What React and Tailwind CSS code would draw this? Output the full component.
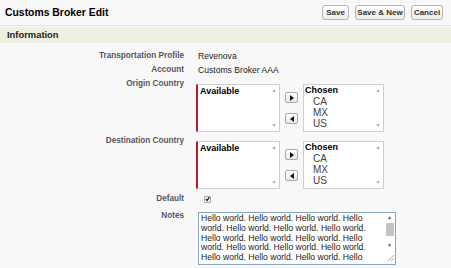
import React from "react";

const F = { fontFamily: '"Liberation Sans", Arial, sans-serif' };

function Btn({ children, w }) {
  return (
    <div
      className={`flex h-[15px] items-center justify-center rounded-[3px] border border-[#b5b5b5] bg-gradient-to-b from-white to-[#ececec] text-[8px] font-bold text-[#333] ${w}`}
    >
      {children}
    </div>
  );
}

function Scroll() {
  return (
    <div className="flex w-[10px] flex-col items-center justify-between py-[3px] text-[5px] leading-[5px] text-[#a8a8a8]">
      <span>▲</span>
      <span>▼</span>
    </div>
  );
}

function Dual() {
  return (
    <div className="flex items-start">
      <div className="flex h-[48px] w-[84px] border border-[#cfcfcf] border-l-[2px] border-l-[#b41f2b] bg-white pl-[1px]">
        <div className="flex-1 pl-[1px] pt-[1px] text-[9px] font-bold leading-[11px] text-black">Available</div>
        <Scroll />
      </div>
      <div className="ml-[5px] mt-[8px] flex flex-col gap-[10px]">
        <div className="flex h-[11px] w-[13px] items-center justify-center rounded-[2px] border border-[#aaa] bg-gradient-to-b from-white to-[#e8e8e8]">
          <svg width="4" height="6" viewBox="0 0 4 6"><path d="M0 0 L4 3 L0 6 Z" fill="#111" /></svg>
        </div>
        <div className="flex h-[11px] w-[13px] items-center justify-center rounded-[2px] border border-[#aaa] bg-gradient-to-b from-white to-[#e8e8e8]">
          <svg width="4" height="6" viewBox="0 0 4 6"><path d="M4 0 L0 3 L4 6 Z" fill="#111" /></svg>
        </div>
      </div>
      <div className="ml-[5px] flex h-[48px] w-[81px] border border-[#cfcfcf] bg-white">
        <div className="flex-1 pl-[1px] leading-[11px]">
          <div className="text-[9px] font-bold text-black">Chosen</div>
          <div className="pl-[8px] text-[10px] text-[#444]">CA</div>
          <div className="pl-[8px] text-[10px] text-[#444]">MX</div>
          <div className="pl-[8px] text-[10px] text-[#444]">US</div>
        </div>
        <Scroll />
      </div>
    </div>
  );
}

function Label({ children }) {
  return (
    <div className="w-[185px] shrink-0 pr-[1px] text-right text-[8.2px] font-bold leading-[14px] text-[#56565f]">
      {children}
    </div>
  );
}

export default function App() {
  const lines = [
    "Hello world. Hello world. Hello world. Hello",
    "world. Hello world. Hello world. Hello world.",
    "Hello world. Hello world. Hello world. Hello",
    "world. Hello world. Hello world. Hello world.",
    "Hello world. Hello world. Hello world. Hello",
  ];
  return (
    <div style={F} className="h-[268px] w-[451px] overflow-hidden bg-[#f8f8f8]">
      <div className="flex h-[26px] items-center justify-between border-b border-[#e3e3e3] pl-[5px] pr-[8px]">
        <div className="text-[10.4px] font-bold text-black">Customs Broker Edit</div>
        <div className="flex gap-[6px]">
          <Btn w="w-[27px]">Save</Btn>
          <Btn w="w-[50px]">Save &amp; New</Btn>
          <Btn w="w-[32px]">Cancel</Btn>
        </div>
      </div>
      <div className="mt-[1px] flex h-[16px] items-center bg-[#eef0e1] pl-[7px] text-[9.4px] font-bold text-[#222]">
        Information
      </div>
      <div className="pt-[6px]">
        <div className="flex">
          <Label>Transportation Profile</Label>
          <div className="pl-[13px] text-[8.6px] leading-[14px] text-[#222]">Revenova</div>
        </div>
        <div className="flex">
          <Label>Account</Label>
          <div className="pl-[13px] text-[8.6px] leading-[14px] text-[#222]">Customs Broker AAA</div>
        </div>
        <div className="flex">
          <Label>Origin Country</Label>
          <div className="pl-[11px] pt-[7px]">
            <Dual />
          </div>
        </div>
        <div className="mt-[2px] flex">
          <Label>Destination Country</Label>
          <div className="pl-[11px] pt-[7px]">
            <Dual />
          </div>
        </div>
        <div className="mt-[3px] flex">
          <Label>Default</Label>
          <div className="flex items-center pl-[19px]">
            <div className="flex h-[7px] w-[7px] items-center justify-center rounded-[1px] border border-[#aaa] bg-[#eee]">
              <svg width="6" height="6" viewBox="0 0 6 6"><path d="M1 3 L2.5 4.8 L5.2 0.8" stroke="#111" strokeWidth="1.3" fill="none" /></svg>
            </div>
          </div>
        </div>
        <div className="mt-[3px] flex">
          <Label>Notes</Label>
          <div className="pl-[13px] pt-[3px]">
            <div className="relative flex h-[53px] w-[198px] border border-[#88a6c8] bg-white">
              <div className="flex-1 overflow-hidden pl-[2px] pt-[1px] text-[8.6px] leading-[9.8px] text-[#222]">
                {lines.map((l, i) => (
                  <div key={i} className="whitespace-nowrap">{l}</div>
                ))}
              </div>
              <div className="flex w-[11px] flex-col items-center pt-[2px] text-[5px] leading-[5px] text-[#555]">
                <span>▲</span>
                <div className="mt-[3px] h-[13px] w-[8px] bg-[#c4c4c4]" />
                <span className="mt-[7px]">▼</span>
                <svg className="mt-[7px] ml-[2px]" width="6" height="6" viewBox="0 0 6 6"><path d="M0 6 L6 0 M3 6 L6 3" stroke="#999" strokeWidth="0.8" /></svg>
              </div>
            </div>
          </div>
        </div>
      </div>
    </div>
  );
}
